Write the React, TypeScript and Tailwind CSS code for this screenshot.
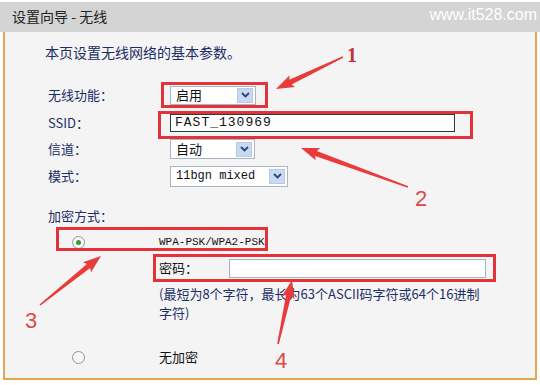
import React from "react";

const cjk = "font-['Noto_Sans_CJK_SC','Noto_Sans',sans-serif]";
const mono = "font-['Liberation_Mono','Courier_New',monospace]";

function Chevron() {
  return (
    <span className="flex h-[15px] w-[16px] items-center justify-center border border-[#b9c9e2] bg-[#c9d9f2]">
      <svg width="9" height="6" viewBox="0 0 9 6">
        <path d="M1 1 L4.5 4.5 L8 1" fill="none" stroke="#27467e" strokeWidth="1.8" />
      </svg>
    </span>
  );
}

function Select({ value, className, textClass }: { value: string; className: string; textClass: string }) {
  return (
    <div className={`flex items-center justify-between border border-[#a7b5c6] bg-white pl-[5px] pr-[2px] ${className}`}>
      <span className={textClass}>{value}</span>
      <Chevron />
    </div>
  );
}

function Radio({ checked }: { checked?: boolean }) {
  return (
    <span className="flex h-[13px] w-[13px] items-center justify-center rounded-full border-[1.5px] border-[#8795a6] bg-[#f7f7f7]">
      {checked && <span className="h-[5px] w-[5px] rounded-full bg-[#3c9a3c]" />}
    </span>
  );
}

function arrow(x1: number, y1: number, x2: number, y2: number, head = 16, headW = 13) {
  const len = Math.hypot(x2 - x1, y2 - y1);
  const ux = (x2 - x1) / len;
  const uy = (y2 - y1) / len;
  const nx = -uy;
  const ny = ux;
  const bx = x2 - ux * head;
  const by = y2 - uy * head;
  const w0 = 0.8;
  const w1 = 2.6;
  const pts = [
    [x1 + nx * w0, y1 + ny * w0],
    [bx + nx * w1, by + ny * w1],
    [bx + nx * headW / 2 - ux * 2, by + ny * headW / 2 - uy * 2],
    [x2, y2],
    [bx - nx * headW / 2 - ux * 2, by - ny * headW / 2 - uy * 2],
    [bx - nx * w1, by - ny * w1],
    [x1 - nx * w0, y1 - ny * w0],
  ];
  return pts.map((p) => `${p[0].toFixed(1)},${p[1].toFixed(1)}`).join(" ");
}

function Annotations() {
  const red = "#e2333b";
  return (
    <svg className="pointer-events-none absolute left-0 top-0" width="540" height="385">
      <g fill="none" stroke={red} strokeWidth="3">
        <rect x="162.5" y="83.5" width="104" height="23" />
        <rect x="159.5" y="112.5" width="312" height="25" />
        <rect x="57.5" y="228.5" width="209" height="21" />
        <rect x="154.5" y="255.5" width="340" height="25" />
      </g>
      <g fill="#ea3b3b">
        <polygon points={arrow(343, 57, 276, 89)} />
        <polygon points={arrow(408, 187, 301, 148)} />
        <polygon points={arrow(40, 305, 101, 256)} />
        <polygon points={arrow(278, 344, 292, 280)} />
      </g>
      <text x="347" y="62" fill="#c7323a" fontSize="20" fontWeight="bold" fontFamily="Liberation Serif, serif">1</text>
      <text x="415" y="206" fill="#e04848" fontSize="22" fontFamily="Liberation Sans, sans-serif">2</text>
      <text x="25" y="328" fill="#e04848" fontSize="22" fontFamily="Liberation Sans, sans-serif">3</text>
      <text x="275" y="368" fill="#e04848" fontSize="22" fontFamily="Liberation Sans, sans-serif">4</text>
    </svg>
  );
}

export default function App() {
  return (
    <div className={`relative h-[385px] w-[540px] overflow-hidden bg-white pt-[2px] ${cjk}`}>
      <div className="flex h-[30px] items-start justify-between bg-[#d4d4d4] pl-[12px] pr-[3px]">
        <span className="mt-[5px] text-[14px] leading-[18px] text-[#222]">设置向导 - 无线</span>
        <span className="mt-[3px] font-['Liberation_Sans',sans-serif] text-[16px] leading-[20px] text-white">www.it528.com</span>
      </div>
      <div className="mx-[3px] h-[348px] border-x-2 border-b-2 border-[#e2a655] bg-[#f4f4f4] pt-[10px] text-[#1b2d66]">
        <p className="pl-[40px] text-[14px] leading-[20px]">本页设置无线网络的基本参数。</p>

        <div className="mt-[20px] grid grid-cols-[122px_1fr] pl-[43px] text-[13px]">
          <div className="flex h-[26px] items-center">无线功能：</div>
          <div className="flex h-[26px] items-center">
            <Select value="启用" className="h-[19px] w-[86px]" textClass="text-[13px] text-[#111]" />
          </div>

          <div className="flex h-[30px] items-center">SSID：</div>
          <div className="flex h-[30px] items-center">
            <div className={`flex h-[18px] w-[285px] items-center border border-[#2d3a3a] bg-white pl-[4px] text-[13px] tracking-[1px] text-[#111] ${mono}`}>FAST_130969</div>
          </div>

          <div className="flex h-[22px] items-center">信道：</div>
          <div className="flex h-[22px] items-center">
            <Select value="自动" className="h-[20px] w-[85px]" textClass="text-[13px] text-[#111]" />
          </div>

          <div className="flex h-[32px] items-center">模式：</div>
          <div className="flex h-[32px] items-center">
            <Select value="11bgn mixed" className="h-[21px] w-[118px]" textClass={`text-[12px] text-[#111] ${mono}`} />
          </div>
        </div>

        <div className="mt-[14px] flex h-[20px] items-center pl-[43px] text-[13px]">加密方式：</div>

        <div className="grid grid-cols-[87px_1fr] pl-[67px] text-[13px]">
          <div className="flex h-[32px] items-center">
            <Radio checked />
          </div>
          <div className={`flex h-[32px] items-center text-[11px] text-[#111] ${mono}`}>WPA-PSK/WPA2-PSK</div>

          <div />
          <div className="flex h-[20px] items-center text-[#111]">
            <span className="w-[70px]">密码：</span>
            <div className="h-[19px] w-[257px] border border-[#a3b3c6] bg-white" />
          </div>

          <div />
          <p className="mt-[6px] text-[13px] leading-[19px]">
            (最短为8个字符，最长为63个ASCII码字符或64个16进制
            <br />
            字符)
          </p>

          <div className="mt-[25px] flex h-[20px] items-center">
            <Radio />
          </div>
          <div className="mt-[25px] flex h-[20px] items-center text-[#111]">无加密</div>
        </div>
      </div>
      <Annotations />
    </div>
  );
}
